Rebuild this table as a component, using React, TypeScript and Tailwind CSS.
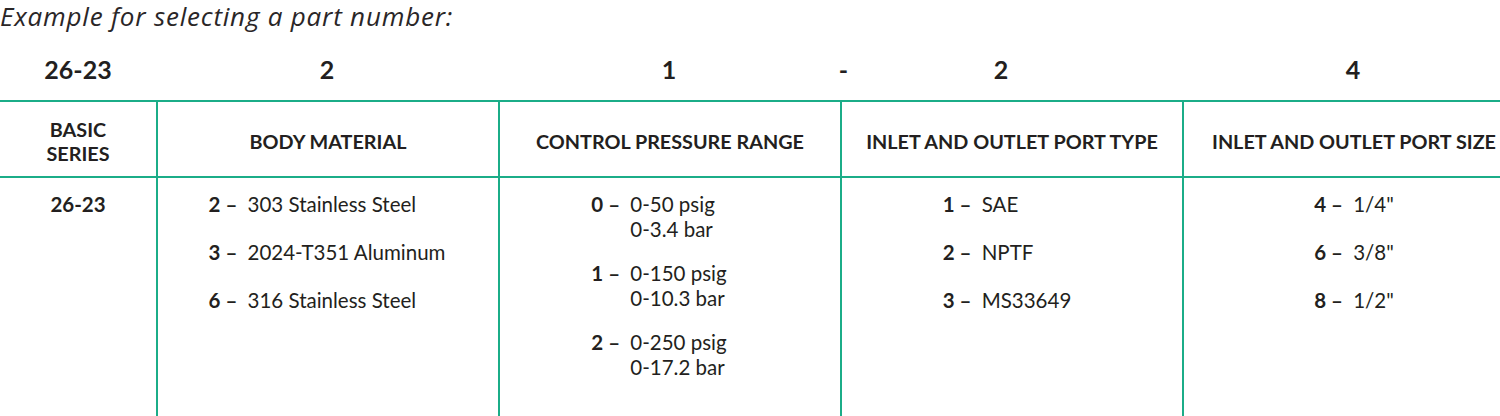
const COLS = "grid grid-cols-[156px_342px_342px_342px_342px]";

const BODY = [
  { code: "2", text: ["303 Stainless Steel"] },
  { code: "3", text: ["2024-T351 Aluminum"] },
  { code: "6", text: ["316 Stainless Steel"] },
];

const PRESSURE = [
  { code: "0", text: ["0-50 psig", "0-3.4 bar"] },
  { code: "1", text: ["0-150 psig", "0-10.3 bar"] },
  { code: "2", text: ["0-250 psig", "0-17.2 bar"] },
];

const PORT_TYPE = [
  { code: "1", text: ["SAE"] },
  { code: "2", text: ["NPTF"] },
  { code: "3", text: ["MS33649"] },
];

const PORT_SIZE = [
  { code: "4", text: ['1/4"'] },
  { code: "6", text: ['3/8"'] },
  { code: "8", text: ['1/2"'] },
];

type Option = { code: string; text: string[] };

function OptionList({ items, gap, offset = "" }: { items: Option[]; gap: string; offset?: string }) {
  return (
    <div className={`flex justify-center ${offset}`}>
      <div className={`flex flex-col ${gap}`}>
        {items.map((o) => (
          <div key={o.code + o.text[0]} className="flex">
            <span className="w-[39px] shrink-0 font-bold">{o.code} –</span>
            <div className="flex flex-col">
              {o.text.map((t) => (
                <span key={t}>{t}</span>
              ))}
            </div>
          </div>
        ))}
      </div>
    </div>
  );
}

export default function App() {
  return (
    <div className="h-[416px] w-[1500px] overflow-hidden bg-white font-['Lato','Liberation_Sans',sans-serif] text-[#231f20]">
      <p className="h-[40px] w-fit pt-[1px] pr-[4px] font-['Open_Sans','Lato',sans-serif] text-[26px] italic leading-[30px] tracking-[0.8px] text-[#2a2627]">
        Example for selecting a part number:
      </p>

      <div className="w-[1524px]">
        {/* part number */}
        <div className={`${COLS} h-[60px] items-center text-center text-[25px] font-bold`}>
          <span>26-23</span>
          <span>2</span>
          <span className="relative">
            1
            <span className="absolute right-[-8px] top-0">-</span>
          </span>
          <span className="pr-[20px]">2</span>
          <span>4</span>
        </div>

        {/* header */}
        <div className={`${COLS} h-[78px] border-y-2 border-[#1bad88] text-center text-[19.8px] font-bold leading-[24px]`}>
          <div className="flex items-center justify-center pt-[3px]">
            BASIC
            <br />
            SERIES
          </div>
          <div className="flex items-center justify-center border-l-2 border-[#1bad88] pt-[3px]">BODY MATERIAL</div>
          <div className="flex items-center justify-center border-l-2 border-[#1bad88] pt-[3px]">CONTROL PRESSURE RANGE</div>
          <div className="flex items-center justify-center border-l-2 border-[#1bad88] pt-[3px]">INLET AND OUTLET PORT TYPE</div>
          <div className="flex items-center justify-center border-l-2 border-[#1bad88] pt-[3px]">INLET AND OUTLET PORT SIZE</div>
        </div>

        {/* options */}
        <div className={`${COLS} h-[260px] text-[20.5px] leading-[25px]`}>
          <div className="pt-[14px] text-center font-bold">26-23</div>
          <div className="border-l-2 border-[#1bad88] pt-[14px]">
            <OptionList items={BODY} gap="gap-[23px]" offset="pr-[2px]" />
          </div>
          <div className="border-l-2 border-[#1bad88] pt-[14px]">
            <OptionList items={PRESSURE} gap="gap-[19px]" offset="pr-[22px]" />
          </div>
          <div className="border-l-2 border-[#1bad88] pt-[14px]">
            <OptionList items={PORT_TYPE} gap="gap-[23px]" offset="pr-[10px]" />
          </div>
          <div className="border-l-2 border-[#1bad88] pt-[14px]">
            <OptionList items={PORT_SIZE} gap="gap-[23px]" />
          </div>
        </div>
      </div>
    </div>
  );
}
